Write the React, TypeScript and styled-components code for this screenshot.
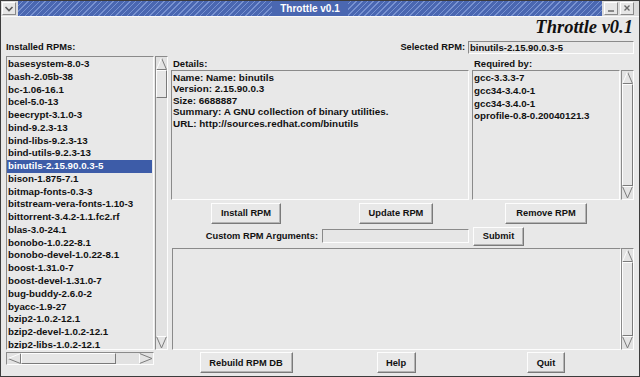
import React from "react";
import styled, { createGlobalStyle } from "styled-components";

const GlobalStyle = createGlobalStyle`
  html, body {
    margin: 0;
    padding: 0;
    background: #e8e8e8;
  }
  body {
    font-family: "Liberation Sans", Arial, sans-serif;
    color: #111;
  }
`;

const installed = [
  "basesystem-8.0-3",
  "bash-2.05b-38",
  "bc-1.06-16.1",
  "bcel-5.0-13",
  "beecrypt-3.1.0-3",
  "bind-9.2.3-13",
  "bind-libs-9.2.3-13",
  "bind-utils-9.2.3-13",
  "binutils-2.15.90.0.3-5",
  "bison-1.875-7.1",
  "bitmap-fonts-0.3-3",
  "bitstream-vera-fonts-1.10-3",
  "bittorrent-3.4.2-1.1.fc2.rf",
  "blas-3.0-24.1",
  "bonobo-1.0.22-8.1",
  "bonobo-devel-1.0.22-8.1",
  "boost-1.31.0-7",
  "boost-devel-1.31.0-7",
  "bug-buddy-2.6.0-2",
  "byacc-1.9-27",
  "bzip2-1.0.2-12.1",
  "bzip2-devel-1.0.2-12.1",
  "bzip2-libs-1.0.2-12.1",
];

const requiredBy = ["gcc-3.3.3-7", "gcc34-3.4.0-1", "gcc34-3.4.0-1", "oprofile-0.8-0.20040121.3"];

const details = [
  "Name: Name: binutils",
  "Version: 2.15.90.0.3",
  "Size: 6688887",
  "Summary: A GNU collection of binary utilities.",
  "URL: http://sources.redhat.com/binutils",
];

const Window = styled.div`
  width: 640px;
  height: 377px;
  box-sizing: border-box;
  border: 1px solid #3c3c3c;
  background: #e8e8e8;
  display: flex;
  flex-direction: column;
  overflow: hidden;
`;

const TitleBar = styled.div`
  height: 15px;
  display: flex;
  align-items: center;
  gap: 2px;
  padding: 0 5px 0 1px;
  background: #dcdcdc;
  flex-shrink: 0;
`;

const Stripes = styled.div`
  flex: 1;
  height: 15px;
  display: flex;
  align-items: center;
  justify-content: center;
  background: repeating-linear-gradient(135deg, #4a67b1 0 3px, #7892d1 3px 4px);
`;

const TitleText = styled.span`
  background: #4a67b1;
  color: #fff;
  font-size: 10px;
  font-weight: bold;
  line-height: 15px;
  padding: 0 8px;
`;

const WinButton = styled.div`
  width: 14px;
  height: 13px;
  box-sizing: border-box;
  border: 1px solid;
  border-color: #fff #8a8a8a #8a8a8a #fff;
  background: #e6e6e6;
  display: flex;
  align-items: center;
  justify-content: center;
  flex-shrink: 0;
`;

const Body = styled.div`
  flex: 1;
  display: flex;
  flex-direction: column;
  padding: 0 5px;
  border-top: 1px solid #fafafa;
`;

const LogoRow = styled.div`
  height: 23px;
  display: flex;
  justify-content: flex-end;
  align-items: flex-start;
  padding-right: 1px;
`;

const Logo = styled.span`
  font-family: "Liberation Serif", "Times New Roman", serif;
  font-style: italic;
  font-weight: bold;
  font-size: 18.5px;
  line-height: 21px;
  color: #111;
`;

const HeaderRow = styled.div`
  height: 14px;
  display: flex;
  align-items: center;
  justify-content: space-between;
`;

const Label = styled.span`
  font-size: 9.3px;
  font-weight: bold;
  white-space: nowrap;
`;

const FieldGroup = styled.div`
  display: flex;
  align-items: center;
  gap: 3px;
`;

const Field = styled.div<{ $w: number; $h: number }>`
  width: ${(p) => p.$w}px;
  height: ${(p) => p.$h}px;
  box-sizing: border-box;
  border: 1px solid;
  border-color: #8a8a8a #fdfdfd #fdfdfd #8a8a8a;
  background: #e6e6e6;
  font-size: 9.5px;
  font-weight: bold;
  line-height: ${(p) => p.$h - 2}px;
  padding-left: 1px;
  overflow: hidden;
  white-space: nowrap;
`;

const Main = styled.div`
  margin-top: 2px;
  display: flex;
  gap: 3px;
  flex: 1;
`;

const LeftPane = styled.div`
  width: 162px;
  display: flex;
  flex-direction: column;
  gap: 2px;
`;

const ListRow = styled.div<{ $h: number }>`
  height: ${(p) => p.$h}px;
  display: flex;
  gap: 1px;
`;

const ListBox = styled.div<{ $w?: number }>`
  ${(p) => (p.$w ? `width: ${p.$w}px;` : "flex: 1;")}
  box-sizing: border-box;
  border: 1px solid;
  border-color: #8a8a8a #fdfdfd #fdfdfd #8a8a8a;
  background: #e8e8e8;
  overflow: hidden;
  padding-top: 1px;
`;

const Item = styled.div<{ $selected?: boolean }>`
  font-size: 9.75px;
  font-weight: bold;
  line-height: 12.77px;
  height: 12.77px;
  padding-left: 1px;
  margin-right: 1px;
  white-space: nowrap;
  color: ${(p) => (p.$selected ? "#fff" : "#111")};
  background: ${(p) => (p.$selected ? "#3d5ca8" : "transparent")};
`;

const DetailText = styled.div`
  font-size: 9.9px;
  font-weight: bold;
  line-height: 10.4px;
  padding: 1px 0 0 1px;
  white-space: nowrap;
`;

const RightPane = styled.div`
  flex: 1;
  display: flex;
  flex-direction: column;
`;

const TopGrid = styled.div`
  display: grid;
  grid-template-columns: 298px 1fr;
  grid-template-rows: 14px 130px;
  column-gap: 3px;
`;

const PaneLabel = styled(Label)`
  padding-left: 2px;
  align-self: center;
  font-size: 9.5px;
`;

const ButtonRow = styled.div<{ $h: number }>`
  margin-top: 2px;
  height: ${(p) => p.$h}px;
  display: grid;
  grid-template-columns: repeat(3, 150px);
  justify-items: center;
  align-items: center;
`;

const Button = styled.div<{ $w: number; $h?: number }>`
  width: ${(p) => p.$w}px;
  height: ${(p) => p.$h ?? 21}px;
  box-sizing: border-box;
  border: 1px solid;
  border-color: #fdfdfd #7a7a7a #7a7a7a #fdfdfd;
  box-shadow: inset -1px -1px 0 #b4b4b4;
  background: #e8e8e8;
  display: flex;
  align-items: center;
  justify-content: center;
  font-size: 9.3px;
  font-weight: bold;
  white-space: nowrap;
`;

const CustomRow = styled.div`
  margin-top: 2px;
  height: 20px;
  display: flex;
  align-items: center;
`;

const CustomLabel = styled(Label)`
  width: 147px;
  text-align: right;
  margin-right: 4px;
`;

const OutputRow = styled.div`
  margin-top: 2px;
  height: 102px;
  display: flex;
  padding-left: 1px;
`;

/* scrollbars */

const Trough = styled.div<{ $h?: boolean }>`
  box-sizing: border-box;
  display: flex;
  flex-direction: ${(p) => (p.$h ? "row" : "column")};
  ${(p) => (p.$h ? "height: 13px; width: 148px;" : "width: 13px;")}
  flex-shrink: 0;
  background: #e2e2e2;
  border: 1px solid;
  border-color: #8a8a8a #fdfdfd #fdfdfd #8a8a8a;
`;

const Track = styled.div<{ $h?: boolean }>`
  flex: 1;
  display: flex;
  flex-direction: ${(p) => (p.$h ? "row" : "column")};
  min-width: 0;
  min-height: 0;
`;

const Gap = styled.div<{ $grow: number }>`
  flex: ${(p) => p.$grow} 1 0;
`;

const Thumb = styled.div<{ $grow: number }>`
  flex: ${(p) => p.$grow} 1 0;
  box-sizing: border-box;
  border: 1px solid;
  border-color: #fdfdfd #7a7a7a #7a7a7a #fdfdfd;
  background: #e6e6e6;
`;

type Dir = "up" | "down" | "left" | "right";

const Arrow = ({ dir }: { dir: Dir }) => {
  const v = dir === "up" || dir === "down";
  const w = v ? 11 : 14;
  const h = v ? 13 : 11;
  let light = "";
  let dark = "";
  if (dir === "up") {
    light = "M0.5 12.5 L5.5 1";
    dark = "M5.5 1 L10.5 12.5 L0.5 12.5";
  } else if (dir === "down") {
    light = "M0.5 0.5 L10.5 0.5";
    dark = "M0.5 0.5 L5.5 12 L10.5 0.5";
  } else if (dir === "left") {
    light = "M13.5 0.5 L1 5.5";
    dark = "M1 5.5 L13.5 10.5 L13.5 0.5";
  } else {
    light = "M0.5 0.5 L0.5 10.5";
    dark = "M0.5 10.5 L13 5.5 L0.5 0.5";
  }
  return (
    <svg width={w} height={h} viewBox={`0 0 ${w} ${h}`} style={{ display: "block", flexShrink: 0 }}>
      <path d={dark} fill="#e4e4e4" stroke="#7c7c7c" strokeWidth="1" />
      <path d={light} fill="none" stroke="#fdfdfd" strokeWidth="1" />
    </svg>
  );
};

const ScrollBar = ({
  horizontal,
  start = 0,
  size = 100,
}: {
  horizontal?: boolean;
  start?: number;
  size?: number;
}) => (
  <Trough $h={horizontal}>
    <Arrow dir={horizontal ? "left" : "up"} />
    <Track $h={horizontal}>
      <Gap $grow={start} />
      <Thumb $grow={size} />
      <Gap $grow={100 - start - size} />
    </Track>
    <Arrow dir={horizontal ? "right" : "down"} />
  </Trough>
);

export default function App() {
  return (
    <>
      <GlobalStyle />
      <Window>
        <TitleBar>
          <WinButton>
            <svg width="10" height="8" viewBox="0 0 10 8">
              <polyline points="1.5,2 5,5.5 8.5,2" fill="none" stroke="#5a5a5a" strokeWidth="1.6" />
            </svg>
          </WinButton>
          <Stripes>
            <TitleText>Throttle v0.1</TitleText>
          </Stripes>
          <WinButton>
            <svg width="10" height="9" viewBox="0 0 10 9">
              <line x1="2" y1="7" x2="8" y2="7" stroke="#6a6a6a" strokeWidth="1.5" />
            </svg>
          </WinButton>
          <WinButton>
            <svg width="10" height="9" viewBox="0 0 10 9">
              <path d="M2.5 1.5 L7.5 6.5 M7.5 1.5 L2.5 6.5" stroke="#6a6a6a" strokeWidth="1.4" />
            </svg>
          </WinButton>
        </TitleBar>
        <Body>
          <LogoRow>
            <Logo>Throttle v0.1</Logo>
          </LogoRow>
          <HeaderRow>
            <Label>Installed RPMs:</Label>
            <FieldGroup>
              <Label>Selected RPM:</Label>
              <Field $w={166} $h={13}>binutils-2.15.90.0.3-5</Field>
            </FieldGroup>
          </HeaderRow>
          <Main>
            <LeftPane>
              <ListRow $h={294}>
                <ListBox $w={148}>
                  {installed.map((name) => (
                    <Item key={name} $selected={name === "binutils-2.15.90.0.3-5"}>
                      {name}
                    </Item>
                  ))}
                </ListBox>
                <ScrollBar start={0} size={10} />
              </ListRow>
              <ScrollBar horizontal start={0} size={80} />
            </LeftPane>
            <RightPane>
              <TopGrid>
                <PaneLabel>Details:</PaneLabel>
                <PaneLabel>Required by:</PaneLabel>
                <ListBox>
                  {details.map((line) => (
                    <DetailText key={line}>{line}</DetailText>
                  ))}
                </ListBox>
                <ListRow $h={130}>
                  <ListBox>
                    {requiredBy.map((name, i) => (
                      <Item key={name + i}>{name}</Item>
                    ))}
                  </ListBox>
                  <ScrollBar />
                </ListRow>
              </TopGrid>
              <ButtonRow $h={22}>
                <Button $w={70}>Install RPM</Button>
                <Button $w={74}>Update RPM</Button>
                <Button $w={82}>Remove RPM</Button>
              </ButtonRow>
              <CustomRow>
                <CustomLabel>Custom RPM Arguments:</CustomLabel>
                <Field $w={147} $h={14} />
                <Button $w={51} $h={19} style={{ marginLeft: 4 }}>
                  Submit
                </Button>
              </CustomRow>
              <OutputRow>
                <ListBox />
                <ScrollBar />
              </OutputRow>
              <ButtonRow $h={21}>
                <Button $w={93}>Rebuild RPM DB</Button>
                <Button $w={39}>Help</Button>
                <Button $w={38}>Quit</Button>
              </ButtonRow>
            </RightPane>
          </Main>
        </Body>
      </Window>
    </>
  );
}
